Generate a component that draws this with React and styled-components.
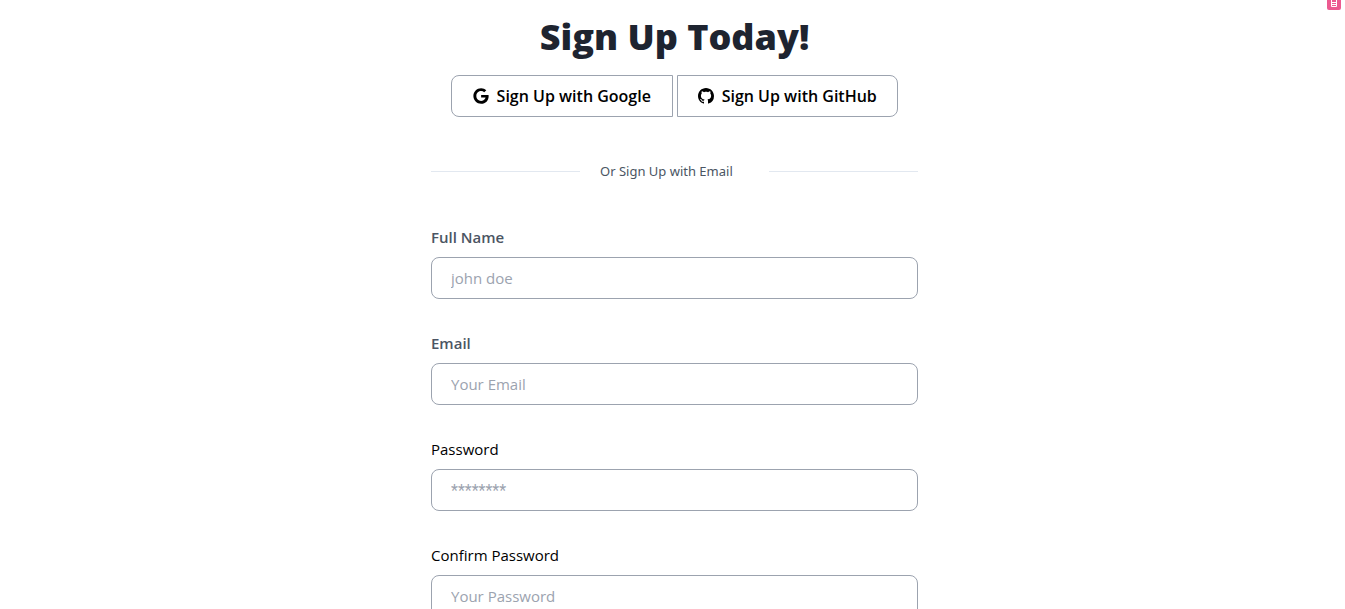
import React from "react";
import styled, { createGlobalStyle } from "styled-components";
import { BsGithub } from "react-icons/bs";
import { FaGoogle } from "react-icons/fa";

const GlobalStyle = createGlobalStyle`
  *, *::before, *::after { box-sizing: border-box; }
  body {
    margin: 0;
    background: #fff;
    color: #000;
    font-family: "Open Sans", "Noto Sans", sans-serif;
    font-size: 15px;
    line-height: 24px;
  }
`;

const Page = styled.main`
  display: flex;
  justify-content: center;
  padding: 16px 0 32px 4px;
`;

const Column = styled.div`
  width: 100%;
  max-width: 487px;
`;

const Title = styled.h1`
  margin: 0 0 18px;
  color: #1e2430;
  font-size: 36px;
  font-weight: 800;
  line-height: 41px;
  text-align: center;
`;

const Providers = styled.div`
  display: flex;
  gap: 4px;
  padding: 0 20px;
`;

const ProviderButton = styled.button`
  flex: 1;
  display: flex;
  align-items: center;
  justify-content: center;
  gap: 8px;
  height: 42px;
  padding: 0;
  border: 1px solid #9ca3af;
  border-radius: ${(p) => (p.$side === "left" ? "8px 0 0 8px" : "0 8px 8px 0")};
  background: #fff;
  color: #000;
  font: inherit;
  font-size: 16px;
  font-weight: 600;
  white-space: nowrap;
  cursor: pointer;

  svg { flex: none; }
`;

const Divider = styled.div`
  display: flex;
  align-items: center;
  margin: 42px 0;
`;

const Line = styled.span`
  flex: 1;
  height: 1px;
  background: #e2e8f0;
`;

const DividerText = styled.span`
  width: 189px;
  padding-left: 20px;
  color: #4b5563;
  font-family: "Noto Sans", sans-serif;
  font-size: 13px;
`;

const Form = styled.form`
  display: grid;
  gap: 32px;
`;

const Field = styled.div`
  display: grid;
  gap: 8px;
`;

const Label = styled.label`
  color: ${(p) => (p.$strong ? "#4b5563" : "#000")};
  font-weight: ${(p) => (p.$strong ? 600 : 400)};
`;

const Input = styled.input`
  width: 100%;
  height: 42px;
  padding: 0 19px;
  border: 1px solid #9ca3af;
  border-radius: 8px;
  background: #fff;
  color: #000;
  font: inherit;

  &::placeholder {
    color: #9ca3af;
    opacity: 1;
    ${(p) => p.$masked && 'font-family: Roboto, sans-serif; font-size: 16px;'}
  }
`;

const CornerBadge = styled.button`
  position: absolute;
  top: 0;
  right: 4px;
  width: 14px;
  height: 10px;
  padding: 0;
  border: 0;
  border-radius: 0 0 2px 2px;
  background: #ec5a90;
  display: flex;
  justify-content: center;
`;

const fields = [
  { id: "name", label: "Full Name", placeholder: "john doe", type: "text", strong: true },
  { id: "email", label: "Email", placeholder: "Your Email", type: "email", strong: true },
  { id: "password", label: "Password", placeholder: "********", type: "password", masked: true },
  { id: "confirm", label: "Confirm Password", placeholder: "Your Password", type: "password" },
];

export default function App() {
  return (
    <>
      <GlobalStyle />
      <Page>
        <Column>
          <Title>Sign Up Today!</Title>
          <Providers>
            <ProviderButton type="button" $side="left">
              <FaGoogle size={16} />
              Sign Up with Google
            </ProviderButton>
            <ProviderButton type="button" $side="right">
              <BsGithub size={16} />
              Sign Up with GitHub
            </ProviderButton>
          </Providers>
          <Divider>
            <Line />
            <DividerText>Or Sign Up with Email</DividerText>
            <Line />
          </Divider>
          <Form>
            {fields.map((f) => (
              <Field key={f.id}>
                <Label htmlFor={f.id} $strong={f.strong}>{f.label}</Label>
                <Input id={f.id} type={f.type} placeholder={f.placeholder} $masked={f.masked} />
              </Field>
            ))}
          </Form>
        </Column>
      </Page>
      <CornerBadge type="button" aria-label="Open extension">
        <svg width="14" height="10" viewBox="0 0 14 10" fill="none" stroke="#fff">
          <path d="M4.5 0V6.5H9.5V0M5 2.5H9M5 4.5H9" />
        </svg>
      </CornerBadge>
    </>
  );
}
